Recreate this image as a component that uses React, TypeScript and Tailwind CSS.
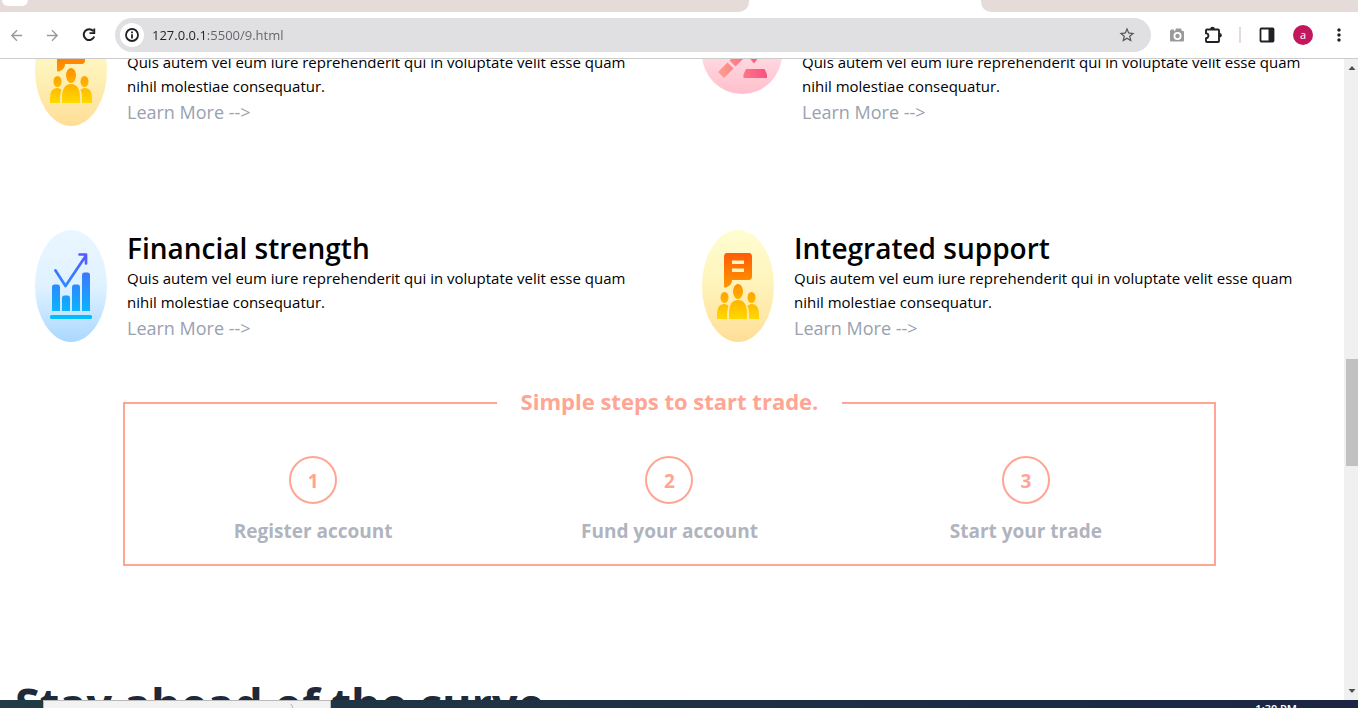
import React, { useState } from "react";
import { MdArrowBack, MdArrowForward, MdStarBorder, MdMoreVert } from "react-icons/md";

function ReloadIcon() {
  return (
    <svg width="18" height="18" viewBox="0 0 18 18" aria-hidden="true">
      <path d="M13.300 5.200A5.400 5.400 0 1 0 14.200 10.500" fill="none" stroke="#202124" strokeWidth="2" />
      <path d="M15.200 2.500V8H9.500V6.200H13.300V2.500z" fill="#202124" />
    </svg>
  );
}

function InfoIcon() {
  return (
    <svg width="16" height="16" viewBox="0 0 16 16" aria-hidden="true">
      <circle cx="8" cy="8" r="6" fill="none" stroke="#202124" strokeWidth="1.800" />
      <path d="M7.100 7.200h1.800V11.500H7.100zM7.100 4.500h1.800v1.700H7.100z" fill="#202124" />
    </svg>
  );
}

function CameraIcon() {
  return (
    <svg width="16" height="16" viewBox="0 0 16 16" aria-hidden="true">
      <path d="M2 2.500h3v1.500h1l1-2.500h5l1 2.500h1a1 1 0 0 1 1 1v8.500a1 1 0 0 1-1 1H2a1 1 0 0 1-1-1V4z" fill="#9a9a9a" />
      <circle cx="8.500" cy="9" r="3.100" fill="none" stroke="#fff" strokeWidth="1.800" />
    </svg>
  );
}

function PuzzleIcon() {
  return (
    <svg width="20" height="20" viewBox="0 0 20 20" aria-hidden="true">
      <path d="M4 4.500h11a1 1 0 0 1 1 1V16a1 1 0 0 1-1 1H4a1 1 0 0 1-1-1v-2.800a2.400 2.400 0 0 0 0-4.800V5.500a1 1 0 0 1 1-1z" fill="none" stroke="#202124" strokeWidth="1.900" strokeLinejoin="round" />
      <path d="M7.200 4a2.300 2.300 0 0 1 4.600 0z" fill="#202124" />
      <path d="M16.500 8a2.300 2.300 0 0 1 0 4.600z" fill="#202124" />
    </svg>
  );
}

function SidePanelIcon() {
  return (
    <svg width="16" height="16" viewBox="0 0 16 16" aria-hidden="true">
      <rect x="1.500" y="1.500" width="13" height="13" rx="0.800" fill="#fff" stroke="#202124" strokeWidth="1.800" />
      <path d="M9.500 1.500h5v13h-5z" fill="#202124" />
    </svg>
  );
}

function SupportIcon({ id }: { id: string }) {
  const back = id + "-back";
  const front = id + "-front";
  return (
    <svg width="72" height="112" viewBox="0 0 72 112" aria-hidden="true" className="shrink-0">
      <defs>
        <linearGradient id={back} x1="0" y1="0" x2="0" y2="1">
          <stop offset="0" stopColor="#fffdd0" />
          <stop offset="0.500" stopColor="#fef3ba" />
          <stop offset="1" stopColor="#ffde96" />
        </linearGradient>
        <linearGradient id={front} gradientUnits="userSpaceOnUse" x1="0" y1="22" x2="0" y2="90">
          <stop offset="0" stopColor="#ff5a08" />
          <stop offset="0.500" stopColor="#ff9500" />
          <stop offset="1" stopColor="#ffdc00" />
        </linearGradient>
      </defs>
      <ellipse cx="36" cy="56" rx="36" ry="56" fill={`url(#${back})`} />
      <g fill={`url(#${front})`}>
        <path fillRule="evenodd" d="M25 23h22q3 0 3 4v19q0 4-3 4H30q0 5-5 7q-3 2-3-1V27q0-4 3-4zM30 30.500v3.500h12v-3.500zM30 38.500V42h12v-3.500z" />
        <ellipse cx="36" cy="61.500" rx="5" ry="7.500" />
        <ellipse cx="22.500" cy="67.500" rx="4" ry="5.500" />
        <ellipse cx="49.500" cy="67.500" rx="4" ry="5.500" />
        <path d="M27 89V84Q27 70 36 70T45 84V89z" />
        <path d="M15 89V85Q15 73 23 74L26.500 75.500Q25 79 25 84V89z" />
        <path d="M57 89V85Q57 73 49 74L45.500 75.500Q47 79 47 84V89z" />
      </g>
    </svg>
  );
}

function ChartIcon() {
  return (
    <svg width="72" height="112" viewBox="0 0 72 112" aria-hidden="true" className="shrink-0">
      <defs>
        <linearGradient id="chart-back" x1="0" y1="0" x2="0" y2="1">
          <stop offset="0" stopColor="#eaf6ff" />
          <stop offset="0.500" stopColor="#e0f2ff" />
          <stop offset="1" stopColor="#aad8ff" />
        </linearGradient>
        <linearGradient id="chart-front" gradientUnits="userSpaceOnUse" x1="0" y1="23" x2="0" y2="89">
          <stop offset="0" stopColor="#5558ff" />
          <stop offset="1" stopColor="#00c0ff" />
        </linearGradient>
      </defs>
      <ellipse cx="36" cy="56" rx="36" ry="56" fill="url(#chart-back)" />
      <g fill="url(#chart-front)">
        <path d="M17 81V57q0-2.500 2-2.500h4q2 0 2 2.500V81z" />
        <path d="M27 81V68q0-2.500 2-2.500h4q2 0 2 2.500V81z" />
        <path d="M37 81V57q0-2.500 2-2.500h4q2 0 2 2.500V81z" />
        <path d="M47 81V45q0-2.500 2-2.500h4q2 0 2 2.500V81z" />
        <rect x="15" y="85" width="42" height="4" rx="1.500" />
      </g>
      <path d="M20.500 40.500L30.500 56L51 25.500M44.500 24.500H51V33.500" fill="none" stroke="url(#chart-front)" strokeWidth="2.700" strokeLinecap="round" strokeLinejoin="round" />
    </svg>
  );
}

function GavelIcon() {
  return (
    <svg width="80" height="80" viewBox="0 0 80 80" aria-hidden="true" className="shrink-0">
      <defs>
        <linearGradient id="gavel-back" x1="0" y1="0" x2="0" y2="1">
          <stop offset="0" stopColor="#ffe8ed" />
          <stop offset="0.500" stopColor="#ffdbe2" />
          <stop offset="1" stopColor="#ffbfcc" />
        </linearGradient>
        <linearGradient id="gavel-front" gradientUnits="userSpaceOnUse" x1="16" y1="60" x2="62" y2="48">
          <stop offset="0" stopColor="#ffa18d" />
          <stop offset="1" stopColor="#fd4e82" />
        </linearGradient>
      </defs>
      <circle cx="40" cy="40" r="40" fill="url(#gavel-back)" />
      <g fill="url(#gavel-front)">
        <path d="M25.500 48.500L31.500 54.500L22 64L16 58z" />
        <path d="M27.500 46.500L42 32L48 38L33.500 52.500z" />
        <path d="M36 30L49 13L65 32L52 49.500z" />
        <path d="M41.500 64V60.500L44 55H62.500L65 60.500V64z" />
      </g>
    </svg>
  );
}

interface FeatureProps {
  icon: React.ReactNode;
  title: string;
}

function Feature({ icon, title }: FeatureProps) {
  return (
    <article className="flex items-start gap-5 px-[30px]">
      {icon}
      <div className="min-w-0">
        <h2 className="text-[28px] font-semibold leading-9 text-black">{title}</h2>
        <p className="text-[15px] leading-6 text-black">
          Quis autem vel eum iure reprehenderit qui in voluptate velit esse quam nihil molestiae consequatur.
        </p>
        <a href="#more" className="block text-lg leading-7 text-gray-400">{"Learn More -->"}</a>
      </div>
    </article>
  );
}

const steps = ["Register account", "Fund your account", "Start your trade"];

function BrowserBar() {
  const [url, setUrl] = useState("127.0.0.1:5500/9.html");
  return (
    <header className="shrink-0 border-b border-[#cccccc] bg-white">
      <div className="flex h-3 justify-between">
        <div className="w-[749px] rounded-br-[10px] bg-[#e5dbd8] pl-[2px]">
          <div className="h-[6px] w-[26px] rounded-b-[8px] bg-white" />
        </div>
        <div className="w-[377px] rounded-bl-[10px] bg-[#e5dbd8]" />
      </div>
      <div className="flex h-[46px] items-center">
        <div className="flex w-[115px] items-center gap-[19px] pl-2">
          <button type="button" aria-label="Back" className="text-[#9a9a9a]"><MdArrowBack size={17} /></button>
          <button type="button" aria-label="Forward" className="text-[#9a9a9a]"><MdArrowForward size={17} /></button>
          <button type="button" aria-label="Reload"><ReloadIcon /></button>
        </div>
        <div className="flex h-[34px] flex-1 items-center gap-2 rounded-full bg-[#e0e0e2] pl-[5px] pr-[15px]">
          <button type="button" aria-label="Site information" className="flex size-6 items-center justify-center rounded-full bg-white">
            <InfoIcon />
          </button>
          <input
            aria-label="Address"
            value={url}
            onChange={(e) => setUrl(e.target.value)}
            className="h-6 min-w-0 flex-1 bg-[linear-gradient(to_right,#202124_54px,#5f6368_54px)] bg-clip-text text-[13px] text-transparent outline-none"
          />
          <button type="button" aria-label="Bookmark" className="text-[#505357]"><MdStarBorder size={18} /></button>
        </div>
        <div className="flex w-[207px] items-center pl-[18px]">
          <button type="button" aria-label="Screenshot"><CameraIcon /></button>
          <button type="button" aria-label="Extensions" className="ml-[18px]"><PuzzleIcon /></button>
          <span className="ml-4 h-4 w-[2px] shrink-0 bg-[#e5dbd8]" />
          <button type="button" aria-label="Side panel" className="ml-[18px]"><SidePanelIcon /></button>
          <button type="button" aria-label="Profile" className="ml-[18px] size-5 shrink-0 rounded-full bg-[#c2185b] text-[11px] leading-5 text-white">a</button>
          <button type="button" aria-label="Menu" className="ml-4 text-[#202124]"><MdMoreVert size={20} /></button>
        </div>
      </div>
    </header>
  );
}

function ScrollTrack() {
  return (
    <div aria-hidden="true" className="flex w-[14px] shrink-0 flex-col items-end bg-[#f0f0f0]">
      <svg width="12" height="17" viewBox="0 0 12 17"><path d="M2.500 11L6 7L9.500 11z" fill="#505050" /></svg>
      <div className="flex w-full flex-1 flex-col items-end">
        <div className="grow-[283]" />
        <div className="h-[107px] w-3 bg-[#c1c1c1]" />
        <div className="grow-[217]" />
      </div>
      <svg width="12" height="17" viewBox="0 0 12 17"><path d="M2.500 6L6 10L9.500 6z" fill="#505050" /></svg>
    </div>
  );
}

export default function App() {
  return (
    <div className="flex h-screen flex-col overflow-hidden bg-white font-['Open_Sans','Noto_Sans',sans-serif]">
      <BrowserBar />
      <div className="flex min-h-0 flex-1">
        <main className="min-w-0 flex-1 overflow-hidden">
          <div className="-mt-[45px] grid grid-cols-2 gap-y-[104px] px-[5px]">
            <Feature icon={<SupportIcon id="advice" />} title="Expert advice" />
            <Feature icon={<GavelIcon />} title="Regulated trading" />
            <Feature icon={<ChartIcon />} title="Financial strength" />
            <Feature icon={<SupportIcon id="support" />} title="Integrated support" />
          </div>
          <fieldset className="ml-[123px] mr-32 mt-[43px] border-2 border-[#ffa594] px-[10px] pb-[18px]">
            <legend className="mx-auto px-6 pb-1 text-[22px] font-bold leading-8 text-[#ffa594]">Simple steps to start trade.</legend>
            <ol className="grid grid-cols-3 pt-[35px]">
              {steps.map((label, i) => (
                <li key={label} className="flex flex-col items-center gap-3">
                  <span className="flex size-12 items-center justify-center rounded-full border-2 border-[#ffa594] pt-[2px] text-[19px] font-bold text-[#ffa594]">{i + 1}</span>
                  <span className="text-[19px] font-bold leading-[30px] text-[#afb4be]">{label}</span>
                </li>
              ))}
            </ol>
          </fieldset>
          <h1 className="mt-[106px] pl-[15px] text-[45px] font-bold leading-[64px] text-gray-800">Stay ahead of the curve</h1>
        </main>
        <ScrollTrack />
      </div>
      <footer className="flex h-2 shrink-0 items-start justify-between overflow-hidden bg-linear-to-r from-[#223b44] to-[#1b2543] pl-[43px] pr-[61px]">
        <div className="flex h-2 w-[288px] justify-end border border-b-0 border-[#b9b9b9] bg-[#f2f2f2] pr-9">
          <svg width="4" height="7" viewBox="0 0 4 7" aria-hidden="true"><path d="M1 3L3 7" stroke="#c9a9a5" fill="none" /></svg>
        </div>
        <time className="pt-[2px] text-[11px] font-semibold leading-[14px] text-white">1:30 PM</time>
      </footer>
    </div>
  );
}
